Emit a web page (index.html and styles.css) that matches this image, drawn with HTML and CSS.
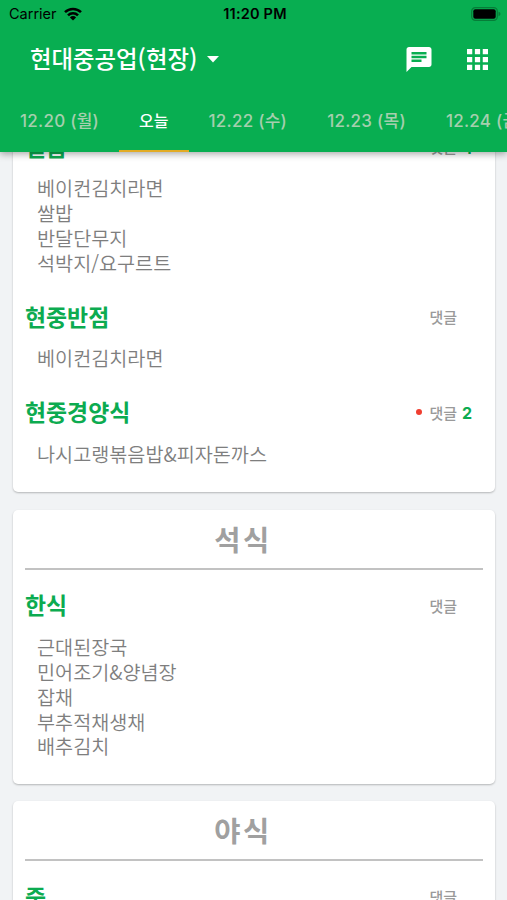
FILE: index.html
```html
<!DOCTYPE html>
<html lang="ko">
<head>
<meta charset="utf-8">
<title>현대중공업(현장)</title>
<link rel="stylesheet" href="styles.css">
</head>
<body>
<div class="app">
  <header class="header">
    <div class="status">
      <div class="carrier"><span>Carrier</span>
        <svg class="wifi" viewBox="0 0 18 14"><g fill="none" stroke="#000" stroke-width="2.5"><path d="M1 5.2a11.3 11.3 0 0 1 16 0"/><path d="M4 8.4a7 7 0 0 1 10 0"/></g><path d="M9 13.6 5.9 10.4a4.4 4.4 0 0 1 6.2 0z"/></svg>
      </div>
      <span class="time">11:20 PM</span>
      <svg class="battery" viewBox="0 0 30 14"><rect x=".7" y=".7" width="25.6" height="12.6" rx="3.6" fill="none" stroke="#067d38" stroke-width="1.2"/><rect x="2.3" y="2.3" width="22.4" height="9.4" rx="2"/><path d="M27.5 4.8q2 .6 2 2.2t-2 2.2z" fill="#067d38"/></svg>
    </div>
    <div class="toolbar">
      <h1 class="place">현대중공업(현장)</h1>
      <svg class="caret" viewBox="0 0 12 7"><path d="M0 0h12L6 6.5z"/></svg>
      <svg class="chat" viewBox="2 2 20 20"><path fill-rule="evenodd" d="M20 2H4c-1.1 0-1.99.9-1.99 2L2 22l4-4h14c1.1 0 2-.9 2-2V4c0-1.1-.9-2-2-2zM6 9h12v2H6V9zm8 5H6v-2h8v2zm4-6H6V6h12v2z"/></svg>
      <svg class="apps" viewBox="4 4 16 16"><path d="M4 8h4V4H4v4zm6 12h4v-4h-4v4zm-6 0h4v-4H4v4zm0-6h4v-4H4v4zm6 0h4v-4h-4v4zm6-10v4h4V4h-4zm-6 4h4V4h-4v4zm6 6h4v-4h-4v4zm0 6h4v-4h-4v4z"/></svg>
    </div>
    <nav class="tabs">
      <span class="tab">12.20 (월)</span>
      <span class="tab active">오늘</span>
      <span class="tab">12.22 (수)</span>
      <span class="tab">12.23 (목)</span>
      <span class="tab">12.24 (금)</span>
    </nav>
  </header>
  <main class="list">
    <article class="card scrolled">
      <section class="menu">
        <div class="row"><h3 class="name">일품</h3><span class="reply">댓글</span><b class="count">4</b></div>
        <ul class="items"><li>베이컨김치라면</li><li>쌀밥</li><li>반달단무지</li><li>석박지/요구르트</li></ul>
      </section>
      <section class="menu">
        <div class="row"><h3 class="name">현중반점</h3><span class="reply">댓글</span><b class="count"></b></div>
        <ul class="items"><li>베이컨김치라면</li></ul>
      </section>
      <section class="menu">
        <div class="row"><h3 class="name">현중경양식</h3><i class="dot"></i><span class="reply">댓글</span><b class="count">2</b></div>
        <ul class="items"><li>나시고랭볶음밥&amp;피자돈까스</li></ul>
      </section>
    </article>
    <article class="card">
      <h2 class="meal">석식</h2>
      <section class="menu">
        <div class="row"><h3 class="name">한식</h3><span class="reply">댓글</span><b class="count"></b></div>
        <ul class="items"><li>근대된장국</li><li>민어조기&amp;양념장</li><li>잡채</li><li>부추적채생채</li><li>배추김치</li></ul>
      </section>
    </article>
    <article class="card">
      <h2 class="meal">야식</h2>
      <section class="menu">
        <div class="row"><h3 class="name">죽</h3><span class="reply">댓글</span><b class="count"></b></div>
      </section>
    </article>
  </main>
</div>
</body>
</html>
```
FILE: styles.css
```css
* { box-sizing: border-box; margin: 0; padding: 0; }
body { background: #f1f3f5; font-family: Inter, "Noto Sans CJK KR", sans-serif; }
svg { display: block; flex: none; }
.app { height: 900px; overflow: hidden; display: flex; flex-direction: column; }
.header { position: relative; z-index: 1; flex: none; height: 152px; background: #08ae51; box-shadow: 0 2px 7px rgba(0,0,0,.35); }
.status { height: 27px; padding: 0 6px 0 9px; display: grid; grid-template-columns: 1fr auto 1fr; align-items: center; font-size: 14.5px; }
.carrier { display: flex; align-items: center; gap: 7px; }
.wifi { width: 18px; height: 14px; }
.time { font-weight: 600; letter-spacing: .2px; }
.battery { width: 30px; height: 14px; justify-self: end; }
.toolbar { height: 65px; padding: 0 19px 0 30px; display: flex; align-items: center; }
.toolbar svg { fill: #fff; }
.place { margin-top: -4px; font: 500 23.4px/34px "Noto Sans CJK KR", sans-serif; color: #fff; white-space: nowrap; }
.caret { width: 12px; height: 7px; margin-left: 10px; }
.chat { width: 26px; height: 25px; margin-left: auto; }
.apps { width: 21px; height: 21px; margin-left: 35px; }
.tabs { height: 60px; display: flex; overflow: hidden; }
.tab { flex: none; padding: 0 20px; line-height: 58px; font-size: 17px; font-weight: 500; letter-spacing: .25px; color: #a5cfae; white-space: nowrap; }
.tab.active { color: #fff; font-size: 16px; letter-spacing: 0; border-bottom: 2px solid #e2ab25; }
.list { padding: 0 12px 0 13px; }
.card { background: #fff; border-radius: 5px; box-shadow: 0 1px 2px rgba(0,0,0,.25); margin-bottom: 17.5px; padding: 0 12px; }
.card.scrolled { margin-top: -22px; padding-bottom: 1px; }
.row { height: 34px; padding-bottom: 1px; display: flex; align-items: center; }
.name { flex: 1; margin-top: -2px; font: 700 22.9px/34px "Noto Sans CJK KR", sans-serif; color: #0cab50; }
.dot { width: 6px; height: 6px; border-radius: 50%; background: #f03e30; margin-right: 7px; }
.reply { font-size: 15px; font-weight: 500; color: #9a9a9a; }
.count { width: 26px; padding: 2px 0 0 5px; font-size: 16px; color: #0cab50; }
.items { list-style: none; padding: 12.3px 0 24.6px 12px; font: 350 19.65px/24.8px "Noto Sans CJK KR", sans-serif; color: #7e7e7e; }
.meal { height: 60px; margin-bottom: 19px; padding-right: 22px; border-bottom: 2px solid #c2c2c2; text-align: center; font: 700 28.5px/58px "Noto Sans CJK KR", sans-serif; letter-spacing: 2.5px; color: #a0a0a0; }
```
